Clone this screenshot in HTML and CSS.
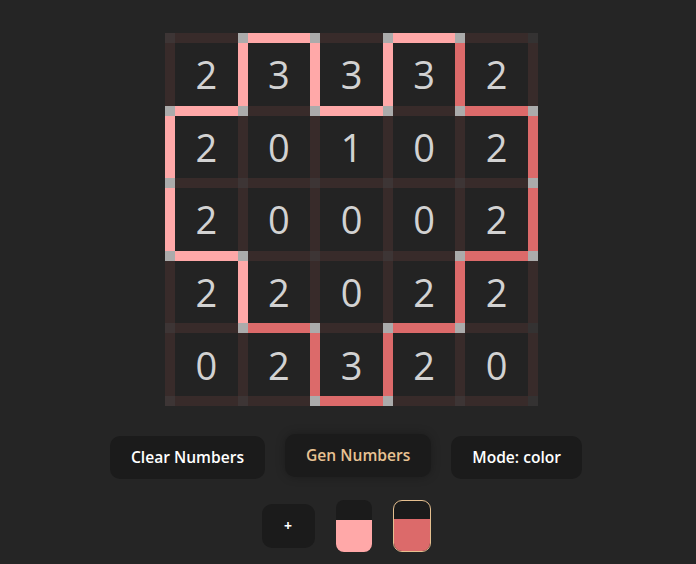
FILE: index.html
```html
<!DOCTYPE html>
<html>
<head>
<meta charset="utf-8">
<link rel="stylesheet" href="styles.css">
</head>
<body>
<div class="app">
  <div class="board">
    <!-- line row 0 -->
    <div class="k"></div><div class="h"></div><div class="k g"></div><div class="h p"></div><div class="k g"></div><div class="h"></div><div class="k g"></div><div class="h p"></div><div class="k g"></div><div class="h"></div><div class="k e"></div>
    <!-- cell row 0 -->
    <div class="v"></div><div class="c">2</div><div class="v p"></div><div class="c">3</div><div class="v p"></div><div class="c">3</div><div class="v p"></div><div class="c">3</div><div class="v r"></div><div class="c">2</div><div class="v"></div>
    <!-- line row 1 -->
    <div class="k g"></div><div class="h p"></div><div class="k g"></div><div class="h"></div><div class="k g"></div><div class="h p"></div><div class="k g"></div><div class="h"></div><div class="k g"></div><div class="h r"></div><div class="k g"></div>
    <!-- cell row 1 -->
    <div class="v p"></div><div class="c">2</div><div class="v"></div><div class="c">0</div><div class="v"></div><div class="c">1</div><div class="v"></div><div class="c">0</div><div class="v"></div><div class="c">2</div><div class="v r"></div>
    <!-- line row 2 -->
    <div class="k g"></div><div class="h"></div><div class="k"></div><div class="h"></div><div class="k"></div><div class="h"></div><div class="k"></div><div class="h"></div><div class="k"></div><div class="h"></div><div class="k g"></div>
    <!-- cell row 2 -->
    <div class="v p"></div><div class="c">2</div><div class="v"></div><div class="c">0</div><div class="v"></div><div class="c">0</div><div class="v"></div><div class="c">0</div><div class="v"></div><div class="c">2</div><div class="v r"></div>
    <!-- line row 3 -->
    <div class="k g"></div><div class="h p"></div><div class="k g"></div><div class="h"></div><div class="k"></div><div class="h"></div><div class="k"></div><div class="h"></div><div class="k g"></div><div class="h r"></div><div class="k g"></div>
    <!-- cell row 3 -->
    <div class="v"></div><div class="c">2</div><div class="v p"></div><div class="c">2</div><div class="v"></div><div class="c">0</div><div class="v"></div><div class="c">2</div><div class="v r"></div><div class="c">2</div><div class="v"></div>
    <!-- line row 4 -->
    <div class="k"></div><div class="h"></div><div class="k g"></div><div class="h r"></div><div class="k g"></div><div class="h"></div><div class="k g"></div><div class="h r"></div><div class="k g"></div><div class="h"></div><div class="k e"></div>
    <!-- cell row 4 -->
    <div class="v"></div><div class="c">0</div><div class="v"></div><div class="c">2</div><div class="v r"></div><div class="c">3</div><div class="v r"></div><div class="c">2</div><div class="v"></div><div class="c">0</div><div class="v"></div>
    <!-- line row 5 -->
    <div class="k"></div><div class="h"></div><div class="k"></div><div class="h"></div><div class="k g"></div><div class="h r"></div><div class="k g"></div><div class="h"></div><div class="k"></div><div class="h"></div><div class="k e"></div>
  </div>

  <div class="actions">
    <button class="btn">Clear Numbers</button>
    <button class="btn btn-active">Gen Numbers</button>
    <button class="btn">Mode: color</button>
  </div>

  <div class="palette">
    <button class="btn btn-add">+</button>
    <div class="swatch swatch-pink"><span class="swatch-fill"></span></div>
    <div class="swatch swatch-red selected"><span class="swatch-fill"></span></div>
  </div>
</div>
</body>
</html>
```
FILE: styles.css
```css
html, body {
  margin: 0;
  padding: 0;
  background: #252525;
}

body {
  font-family: "Open Sans", "Noto Sans", sans-serif;
}

.app {
  width: 692px;
  display: flex;
  flex-direction: column;
  align-items: center;
  padding-top: 33px;
}

.board {
  display: grid;
  grid-template-columns: 10px 62.6px 10px 62.6px 10px 62.6px 10px 62.6px 10px 62.6px 10px;
  grid-template-rows: 10px 62.6px 10px 62.6px 10px 62.6px 10px 62.6px 10px 62.6px 10px;
  margin-left: 11px;
}

.k { background: #3d3535; }
.k.e { background: #343232; }
.k.g { background: #ababab; }
.h, .v { background: #382b2a; }
.h.p, .v.p { background: #ffa8a8; }
.h.r, .v.r { background: #dc6a6a; }

.c {
  background: #232323;
  color: #d2d2d2;
  font-size: 38px;
  line-height: 1;
  display: flex;
  align-items: center;
  justify-content: center;
}

.actions {
  display: flex;
  gap: 20px;
  margin-top: 30px;
}

.btn {
  font-family: "Open Sans", "Noto Sans", sans-serif;
  font-weight: 600;
  font-size: 15.6px;
  color: #ffffff;
  background: #1b1b1b;
  border: none;
  border-radius: 10px;
  height: 43px;
  padding: 0 21px;
  cursor: pointer;
}

.btn-active {
  color: #e8c293;
  transform: translateY(-2px);
  box-shadow: 0 0 10px rgba(0, 0, 0, 0.25);
}

.palette {
  display: flex;
  align-items: center;
  gap: 21px;
  margin-top: 21px;
}

.btn-add {
  width: 53px;
  height: 44px;
  padding: 0;
  font-size: 14px;
  font-weight: 700;
}

.swatch {
  width: 36px;
  height: 52px;
  border-radius: 8px;
  background: #1b1b1b;
  overflow: hidden;
  display: flex;
  flex-direction: column;
  justify-content: flex-end;
  box-sizing: border-box;
}

.swatch-fill {
  display: block;
  height: 32px;
}

.swatch-pink .swatch-fill { background: #ffa8a8; }
.swatch-red .swatch-fill { background: #dc6a6a; }

.swatch.selected {
  width: 38px;
  border: 1px solid #e5bf8f;
  border-radius: 9px;
}
```
